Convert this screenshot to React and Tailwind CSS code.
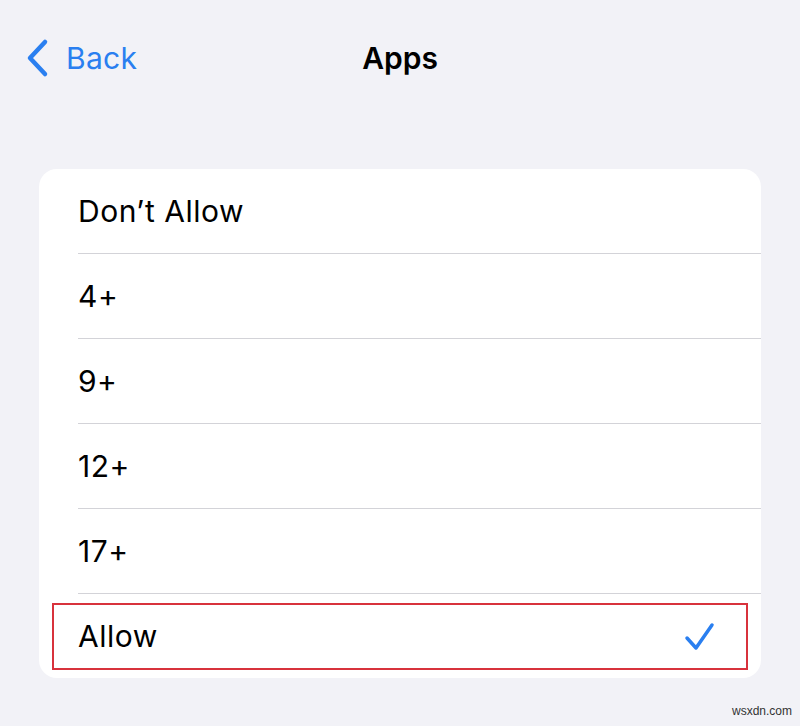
import React from 'react';

const options = ["Don’t Allow", '4+', '9+', '12+', '17+', 'Allow'];

function App() {
    const selected = 'Allow';

    return (
        <div className="w-[800px] h-[726px] bg-[#f2f2f7] relative overflow-hidden" style={{ fontFamily: 'Inter, "Noto Sans", sans-serif' }}>
            {/* nav bar */}
            <div className="h-[120px] grid grid-cols-[1fr_auto_1fr] items-start pt-[38px] px-[24px]">
                <div className="flex items-center gap-[16px] text-[#2a7ff0]">
                    <svg width="26" height="40" viewBox="0 0 26 40" fill="none">
                        <path d="M21 4 L6 20 L21 36" stroke="#2a7ff0" strokeWidth="4.5" strokeLinecap="round" strokeLinejoin="round" />
                    </svg>
                    <span className="text-[30px] leading-[40px] tracking-[0.3px]">Back</span>
                </div>
                <div className="text-center text-[30px] leading-[40px] font-semibold text-black">Apps</div>
                <div />
            </div>

            <div className="mx-[39px] mt-[49px] bg-white rounded-[18px] overflow-hidden">
                {options.map((opt, i) => (
                    <div key={opt}>
                        <div className={opt === selected ? 'h-[84px] px-[13px] pt-[9px] pb-[8px]' : 'h-[84px]'}>
                            <div
                                className={
                                    opt === selected
                                        ? 'h-full flex items-center justify-between pl-[24px] pr-[30px] border-2 border-[#d8323c]'
                                        : 'h-full flex items-center justify-between pl-[39px] pr-[45px]'
                                }
                            >
                                <span className="text-[30px] tracking-[0.5px] text-black">{opt}</span>
                                {opt === selected && (
                                    <svg width="32" height="32" viewBox="0 0 32 32" fill="none">
                                        <path d="M3 17 L12 27 L28 4" stroke="#2a7ff0" strokeWidth="3.5" strokeLinecap="round" strokeLinejoin="round" />
                                    </svg>
                                )}
                            </div>
                        </div>
                        {i < options.length - 1 && <div className="ml-[39px] h-px bg-[#d3d3d8]" />}
                    </div>
                ))}
            </div>

            <div className="absolute right-[8px] bottom-[6px] text-[12px] text-[#333]" style={{ fontFamily: '"Liberation Sans", sans-serif' }}>
                wsxdn.com
            </div>
        </div>
    );
}

export default App;
